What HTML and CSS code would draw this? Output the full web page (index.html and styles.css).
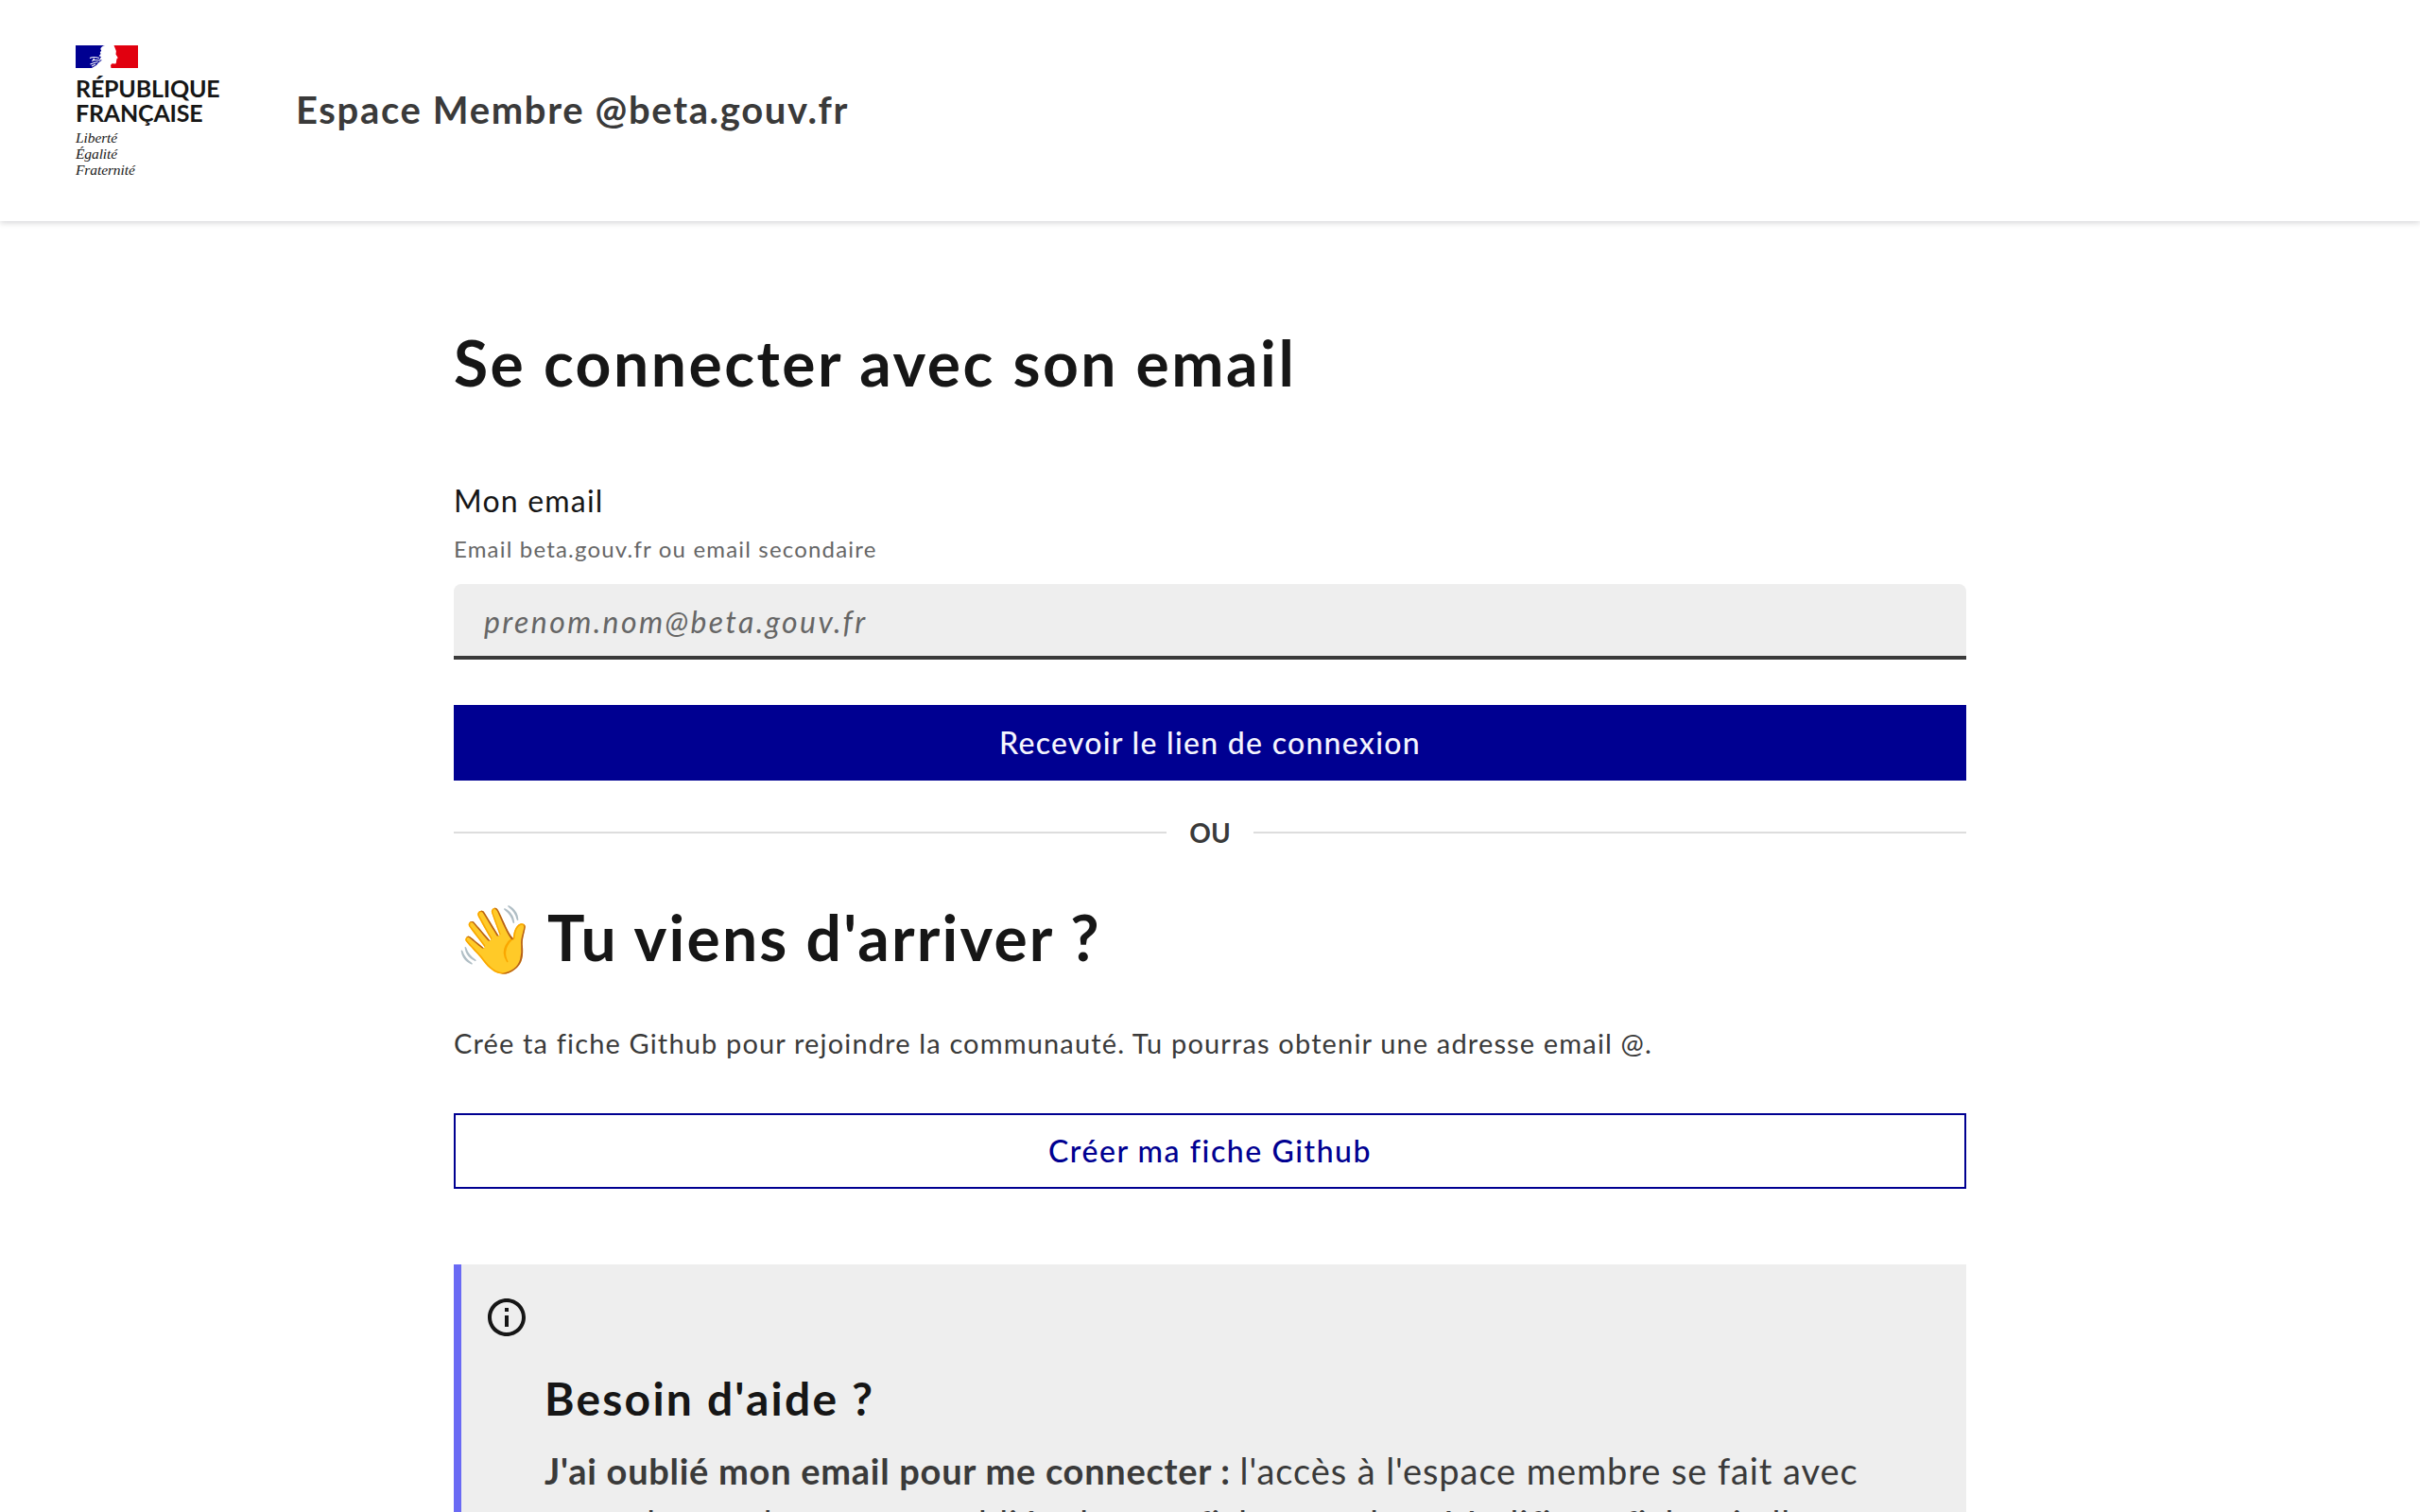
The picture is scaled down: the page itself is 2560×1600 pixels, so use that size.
FILE: index.html
```html
<!DOCTYPE html>
<html lang="fr">
<head>
<meta charset="utf-8">
<title>Espace Membre @beta.gouv.fr</title>
<link rel="stylesheet" href="styles.css">
</head>
<body>
<header class="header">
  <div class="brand">
    <svg class="flag" width="66" height="24" viewBox="0 0 66 24" aria-hidden="true">
      <path fill="#000091" d="M0 0h31c-2.500.6-4.500 2.200-4.700 4l.9 1.500-1.400 2 .8 1.500-2 2.200L27 12l-2 3.500h3l-4 3-2 2.500-5 3H0z"/>
      <path fill="#e1000f" d="M40.500 0H66v24H37.500l-.5-3 1.500-1.800 3.800.3.900-2-.3-1.500.8-.8-.4-1 1.500-.9-2.300-3.800.4-3.500z"/>
      <path fill="none" stroke="#fff" stroke-width="1.100" d="M15 13.500c3-1.500 5-1.500 10 0M17 16.500c3-1.500 5-1.500 9-.5M20 14l-2 1.500M15.500 20l4-1.500 4-1M17 22l4-2"/>
    </svg>
    <div class="republic">RÉPUBLIQUE<br>FRANÇAISE</div>
    <div class="motto">Liberté<br>Égalité<br>Fraternité</div>
  </div>
  <a class="service">Espace Membre @beta.gouv.fr</a>
</header>
<main class="main">
  <h1 class="title">Se connecter avec son email</h1>
  <form class="form">
    <label class="label" for="email">Mon email</label>
    <p class="hint">Email beta.gouv.fr ou email secondaire</p>
    <input class="input" id="email" type="email" placeholder="prenom.nom@beta.gouv.fr">
    <button class="btn btn-primary" type="button">Recevoir le lien de connexion</button>
  </form>
  <div class="or"><span>OU</span></div>
  <h2 class="title title-new"><span class="wave">👋</span><span>Tu viens d'arriver ?</span></h2>
  <p class="text">Crée ta fiche Github pour rejoindre la communauté. Tu pourras obtenir une adresse email @.</p>
  <a class="btn btn-secondary">Créer ma fiche Github</a>
  <section class="callout">
    <svg class="info" width="48" height="48" viewBox="0 0 24 24" fill="#161616" aria-hidden="true"><path d="M12 22C6.477 22 2 17.523 2 12S6.477 2 12 2s10 4.477 10 10-4.477 10-10 10zm0-2a8 8 0 1 0 0-16 8 8 0 0 0 0 16zM11 7h2v2h-2V7zm0 4h2v6h-2v-6z"/></svg>
    <h3 class="help-title">Besoin d'aide ?</h3>
    <p class="help"><strong>J'ai oublié mon email pour me connecter :</strong> <span class="help-rest">l'accès à l'espace membre se fait avec<br>une adresse de contact publiée dans ta fiche membre. Modifie ta fiche si elle</span></p>
  </section>
</main>
</body>
</html>
```
FILE: styles.css
```css
* { box-sizing: border-box; margin: 0; }
html, body { height: 1600px; overflow: hidden; }
body { font-family: Lato, "Liberation Sans", sans-serif; color: #3a3a3a; background: #fff; font-size: 32px; }
.header { display: flex; align-items: center; height: 234px; padding: 0 80px; box-shadow: 0 2px 6px rgba(0,0,18,.16); }
.brand { width: 233px; height: 138px; }
.flag { display: block; }
.republic { margin-top: 8px; font-size: 25px; line-height: 26px; font-weight: 700; letter-spacing: -.2px; color: #161616; }
.motto { margin-top: 5px; font: italic 15.500px/17px "Liberation Serif", serif; letter-spacing: -.1px; color: #161616; }
.service { font-size: 40px; line-height: 56px; padding-bottom: 2px; font-weight: 700; letter-spacing: 1.65px; white-space: nowrap; }
.main { width: 1600px; margin: 110px auto 0; }
.title { font-size: 66px; line-height: 80px; font-weight: 700; letter-spacing: 2.500px; color: #161616; white-space: nowrap; }
.form { display: flex; flex-direction: column; margin-top: 82px; }
.label { font-size: 32px; line-height: 48px; letter-spacing: 1.200px; color: #161616; }
.hint { margin-top: 7px; margin-bottom: 1px; font-size: 24px; line-height: 40px; letter-spacing: 1.180px; color: #666; }
.input { margin-top: 16px; height: 80px; padding: 2px 32px 0; border: 0; border-bottom: 4px solid #3a3a3a; border-radius: 8px 8px 0 0; background: #eee; font: 32px/48px Lato, sans-serif; letter-spacing: 2.400px; }
.input::placeholder { color: #666; font-style: italic; }
.btn { display: flex; align-items: center; justify-content: center; width: 100%; height: 80px; border: 0; font: 500 32px/48px Lato, sans-serif; letter-spacing: 1.280px; }
.btn-primary { margin-top: 48px; background: #000091; color: #f5f5fe; }
.btn-secondary { margin-top: 50px; border: 2px solid #000091; color: #000091; letter-spacing: 1.550px; }
.or { display: flex; align-items: center; gap: 24px; height: 48px; margin-top: 31px; font-size: 28px; line-height: 44px; font-weight: 700; }
.or::before, .or::after { content: ""; flex: 1; height: 2px; background: #ddd; }
.title-new { display: flex; margin-top: 47px; letter-spacing: 2.150px; }
.wave { width: 99px; font-size: 70px; letter-spacing: 0; }
.text { margin-top: 48px; font-size: 29px; line-height: 48px; letter-spacing: 1.150px; white-space: nowrap; }
.callout { margin-top: 80px; height: 262px; overflow: hidden; padding: 32px 96px 0 88px; border-left: 8px solid #6a6af4; background: #eee; }
.info { display: block; margin-left: -64px; }
.help-title { margin-top: 30px; font-size: 48px; line-height: 64px; letter-spacing: 2.200px; color: #161616; }
.help { margin-top: 16px; font-size: 38px; line-height: 56px; white-space: nowrap; }
.help strong { letter-spacing: .720px; }
.help-rest { letter-spacing: .920px; }
```
